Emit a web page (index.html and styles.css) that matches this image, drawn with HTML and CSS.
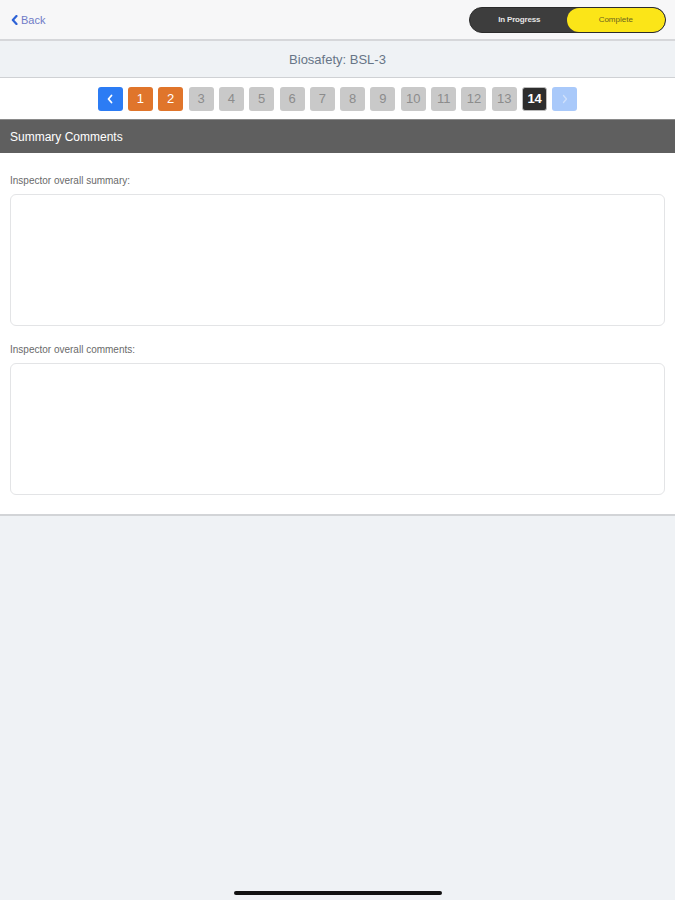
FILE: index.html
```html
<!DOCTYPE html>
<html>
<head>
  <meta charset="utf-8">
  <meta name="viewport" content="width=device-width, initial-scale=1">
  <link rel="stylesheet" href="styles.css">
</head>
<body>
<div id="app">
  <div class="topbar">
    <a class="back" href="#">
      <svg width="7" height="10" viewBox="0 0 7 10"><path d="M5.5 1 L1.8 5 L5.5 9" fill="none" stroke="#2d62d6" stroke-width="2.2" stroke-linecap="round" stroke-linejoin="round"/></svg>
      <span>Back</span>
    </a>
    <div class="segment">
      <div class="seg seg-dark">In Progress</div>
      <div class="seg seg-yellow">Complete</div>
    </div>
  </div>
  <div class="titlebar">Biosafety: BSL-3</div>
  <div class="pager">
    <div class="pg pg-nav">
      <svg width="8" height="10" viewBox="0 0 8 10"><path d="M5.5 1.5 L2.5 5 L5.5 8.5" fill="none" stroke="#fff" stroke-width="1.8" stroke-linecap="round" stroke-linejoin="round"/></svg>
    </div>
    <div class="pg pg-done">1</div>
    <div class="pg pg-done">2</div>
    <div class="pg">3</div>
    <div class="pg">4</div>
    <div class="pg">5</div>
    <div class="pg">6</div>
    <div class="pg">7</div>
    <div class="pg">8</div>
    <div class="pg">9</div>
    <div class="pg">10</div>
    <div class="pg">11</div>
    <div class="pg">12</div>
    <div class="pg">13</div>
    <div class="pg pg-current">14</div>
    <div class="pg pg-nav pg-disabled">
      <svg width="8" height="10" viewBox="0 0 8 10"><path d="M2.5 1.5 L5.5 5 L2.5 8.5" fill="none" stroke="#cfe0fb" stroke-width="1.3" stroke-linecap="round" stroke-linejoin="round"/></svg>
    </div>
  </div>
  <div class="section-head">Summary Comments</div>
  <form class="form">
    <div class="field">
      <label for="summary">Inspector overall summary:</label>
      <textarea id="summary"></textarea>
    </div>
    <div class="field">
      <label for="comments">Inspector overall comments:</label>
      <textarea id="comments"></textarea>
    </div>
  </form>
  <div class="rest">
    <div class="home-bar"></div>
  </div>
</div>
</body>
</html>
```

FILE: styles.css
```css
body, html {
  margin: 0;
  height: 100%;
}

body {
  font-family: "Liberation Sans", Arial, sans-serif;
  background: #eff2f5;
}

#app {
  display: flex;
  flex-direction: column;
  height: 100%;
}

.topbar {
  height: 39px;
  background: #f7f7f8;
  border-bottom: 2px solid #d6d7da;
  display: flex;
  align-items: center;
  justify-content: space-between;
  padding: 0 9px 0 11px;
}

.back {
  display: flex;
  align-items: center;
  gap: 3px;
  color: #6f7bc7;
  font-size: 11px;
  text-decoration: none;
  margin-top: 1px;
}

.segment {
  display: flex;
  width: 195px;
  height: 24px;
  border: 1.5px solid #2b2b2b;
  border-radius: 13px;
  background: #3d3d3d;
  overflow: hidden;
}

.seg {
  flex: 1;
  display: flex;
  align-items: center;
  justify-content: center;
  font-size: 8px;
}

.seg-dark {
  color: #e6e6e6;
  font-weight: bold;
  letter-spacing: -0.2px;
}

.seg-yellow {
  background: #fbe518;
  color: #6b6420;
  border-radius: 12px;
  margin-left: -2px;
}

.titlebar {
  height: 36px;
  background: #eff2f5;
  border-bottom: 1px solid #cfd1d4;
  display: flex;
  align-items: center;
  justify-content: center;
  color: #677587;
  font-size: 13px;
}

.pager {
  height: 41px;
  background: #fff;
  display: flex;
  align-items: center;
  justify-content: center;
  gap: 5.33px;
}

.pg {
  width: 25px;
  height: 24px;
  border-radius: 3px;
  background: #c9c9c9;
  color: #8c8c8c;
  font-size: 13px;
  display: flex;
  align-items: center;
  justify-content: center;
}

.pg-nav {
  background: #2c7cf4;
}

.pg-done {
  background: #e0752b;
  color: #fff;
}

.pg-current {
  background: #2d2d2d;
  color: #fff;
  font-weight: bold;
  border: 1px solid #bbb;
  box-sizing: border-box;
}

.pg-disabled {
  background: #a9c9fa;
}

.section-head {
  height: 33px;
  background: #5f5f5f;
  border-top: 1px solid #8a8a8a;
  color: #fff;
  font-size: 12px;
  display: flex;
  align-items: center;
  padding-left: 10px;
}

.form {
  background: #fff;
  padding: 22px 10px 19px;
  border-bottom: 2px solid #d2d4d7;
}

.field + .field {
  margin-top: 18px;
}

label {
  display: block;
  color: #6a6a6a;
  font-size: 10px;
  margin-bottom: 8px;
}

textarea {
  display: block;
  width: 100%;
  height: 132px;
  box-sizing: border-box;
  border: 1px solid #e3e4e6;
  border-radius: 6px;
  resize: none;
  background: #fff;
}

.rest {
  flex: 1;
  background: #eff2f5;
  display: flex;
  align-items: flex-end;
  justify-content: center;
}

.home-bar {
  width: 208px;
  height: 4px;
  border-radius: 2px;
  background: #111;
  margin-bottom: 5px;
  margin-left: 1px;
}
```
